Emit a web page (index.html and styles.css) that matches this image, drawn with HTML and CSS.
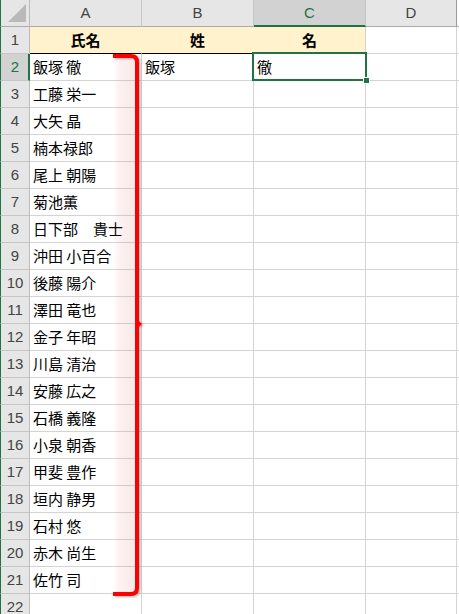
FILE: index.html
```html
<!DOCTYPE html>
<html lang="ja">
<head>
<meta charset="utf-8">
<title>Sheet</title>
<link rel="stylesheet" href="styles.css">
</head>
<body>
<div class="sheet">
  <div class="corner"><svg width="20" height="20" viewBox="0 0 20 20"><polygon points="19,1 19,19 1,19" fill="#b9b9b9"/></svg></div>
  <div class="ch">A</div><div class="ch">B</div><div class="ch on">C</div><div class="ch d">D</div><div class="ch edge"></div>

  <div class="rh">1</div><div class="c hdr">氏名</div><div class="c hdr">姓</div><div class="c hdr last">名</div><div class="c"></div><div class="c"></div>
  <div class="rh on">2</div><div class="c">飯塚 徹</div><div class="c">飯塚</div><div class="c sel">徹</div><div class="c"></div><div class="c"></div>
  <div class="rh">3</div><div class="c">工藤 栄一</div><div class="c"></div><div class="c"></div><div class="c"></div><div class="c"></div>
  <div class="rh">4</div><div class="c">大矢 晶</div><div class="c"></div><div class="c"></div><div class="c"></div><div class="c"></div>
  <div class="rh">5</div><div class="c">楠本禄郎</div><div class="c"></div><div class="c"></div><div class="c"></div><div class="c"></div>
  <div class="rh">6</div><div class="c">尾上 朝陽</div><div class="c"></div><div class="c"></div><div class="c"></div><div class="c"></div>
  <div class="rh">7</div><div class="c">菊池薫</div><div class="c"></div><div class="c"></div><div class="c"></div><div class="c"></div>
  <div class="rh">8</div><div class="c">日下部　貴士</div><div class="c"></div><div class="c"></div><div class="c"></div><div class="c"></div>
  <div class="rh">9</div><div class="c">沖田 小百合</div><div class="c"></div><div class="c"></div><div class="c"></div><div class="c"></div>
  <div class="rh">10</div><div class="c">後藤 陽介</div><div class="c"></div><div class="c"></div><div class="c"></div><div class="c"></div>
  <div class="rh">11</div><div class="c">澤田 竜也</div><div class="c"></div><div class="c"></div><div class="c"></div><div class="c"></div>
  <div class="rh">12</div><div class="c">金子 年昭</div><div class="c"></div><div class="c"></div><div class="c"></div><div class="c"></div>
  <div class="rh">13</div><div class="c">川島 清治</div><div class="c"></div><div class="c"></div><div class="c"></div><div class="c"></div>
  <div class="rh">14</div><div class="c">安藤 広之</div><div class="c"></div><div class="c"></div><div class="c"></div><div class="c"></div>
  <div class="rh">15</div><div class="c">石橋 義隆</div><div class="c"></div><div class="c"></div><div class="c"></div><div class="c"></div>
  <div class="rh">16</div><div class="c">小泉 朝香</div><div class="c"></div><div class="c"></div><div class="c"></div><div class="c"></div>
  <div class="rh">17</div><div class="c">甲斐 豊作</div><div class="c"></div><div class="c"></div><div class="c"></div><div class="c"></div>
  <div class="rh">18</div><div class="c">垣内 静男</div><div class="c"></div><div class="c"></div><div class="c"></div><div class="c"></div>
  <div class="rh">19</div><div class="c">石村 悠</div><div class="c"></div><div class="c"></div><div class="c"></div><div class="c"></div>
  <div class="rh">20</div><div class="c">赤木 尚生</div><div class="c"></div><div class="c"></div><div class="c"></div><div class="c"></div>
  <div class="rh">21</div><div class="c">佐竹 司</div><div class="c"></div><div class="c"></div><div class="c"></div><div class="c"></div>
  <div class="rh">22</div><div class="c"></div><div class="c"></div><div class="c"></div><div class="c"></div><div class="c"></div>
</div>
<svg class="bracket" width="459" height="614" viewBox="0 0 459 614">
  <defs>
    <linearGradient id="glow" x1="0" y1="0" x2="1" y2="0">
      <stop offset="0" stop-color="#e07070" stop-opacity="0"/>
      <stop offset="0.3" stop-color="#e07070" stop-opacity="0.1"/>
      <stop offset="1" stop-color="#e07070" stop-opacity="0.16"/>
    </linearGradient>
    <filter id="sh" x="-20%" y="-5%" width="160%" height="110%">
      <feDropShadow dx="1.5" dy="1" stdDeviation="1.2" flood-color="#000" flood-opacity="0.3"/>
    </filter>
  </defs>
  <rect x="113" y="58" width="23" height="534" fill="url(#glow)"/>
  <g filter="url(#sh)">
    <path d="M113 56 H131 Q137 56 137 62 V588 Q137 594 131 594 H113" fill="none" stroke="#ff0000" stroke-width="4"/>
    <polygon points="137,319 142,324 137,329" fill="#ff0000"/>
  </g>
</svg>
</body>
</html>
```
FILE: styles.css
```css
html, body {
  margin: 0;
  padding: 0;
  background: #fff;
  overflow: hidden;
}
body {
  width: 459px;
  height: 614px;
  position: relative;
}
.sheet {
  display: grid;
  grid-template-columns: 30px 112px 112px 112px 91px 2px;
  grid-auto-rows: 27px;
  font-family: "Noto Sans CJK JP", "Noto Sans", sans-serif;
  font-size: 15px;
  color: #000;
  overflow: hidden;
}
.sheet > div {
  box-sizing: border-box;
  border-right: 1px solid #d4d4d4;
  border-bottom: 1px solid #d4d4d4;
}
.corner {
  background: #e6e6e6;
  border-left: 1px solid #217346;
  border-bottom: 1px solid #ababab !important;
  border-right: 1px solid #bcbcbc !important;
  display: flex;
  align-items: flex-end;
  justify-content: flex-end;
  padding: 0 2px 3px 0;
}
.corner svg { display: block; }
.ch {
  background: #e6e6e6;
  border-right: 1px solid #c6c6c6 !important;
  border-bottom: 1px solid #ababab !important;
  font-family: "Liberation Sans", Arial, sans-serif;
  font-size: 15px;
  color: #444;
  text-align: center;
  line-height: 26px;
}
.ch.on {
  background: #d2d2d2;
  color: #217346;
  border-bottom: 2px solid #217346 !important;
  line-height: 25px;
}
.ch.d {
  border-right: 1px solid #9a9a9a !important;
}
.ch.edge {
  border-right: none !important;
  background: #fff;
}
.rh {
  background: #e6e6e6;
  border-left: 1px solid #217346;
  border-right: 1px solid #bcbcbc !important;
  border-bottom: 1px solid #c6c6c6 !important;
  font-family: "Liberation Sans", Arial, sans-serif;
  font-size: 15px;
  color: #444;
  text-align: center;
  line-height: 26px;
}
.rh.on {
  background: #d2d2d2;
  color: #217346;
  border-right: 2px solid #217346 !important;
  padding-left: 1px;
}
.c {
  padding-left: 3px;
  line-height: 26px;
  white-space: nowrap;
}
.c.hdr {
  background: #fff2cc;
  font-weight: bold;
  text-align: center;
  padding-left: 0;
  border-bottom: 1px solid #000;
  border-right-color: #fff2cc;
}
.c.hdr.last {
  border-right-color: #d4d4d4;
}
.c.sel {
  position: relative;
}
.c.sel::after {
  content: "";
  position: absolute;
  left: -2px;
  top: -2px;
  right: -2px;
  bottom: -1px;
  border: 2px solid #217346;
}
.c.sel::before {
  content: "";
  position: absolute;
  right: -5px;
  bottom: -4px;
  width: 5px;
  height: 5px;
  background: #217346;
  border: 1px solid #fff;
  z-index: 2;
}
.bracket {
  position: absolute;
  left: 0;
  top: 0;
  pointer-events: none;
}
```
